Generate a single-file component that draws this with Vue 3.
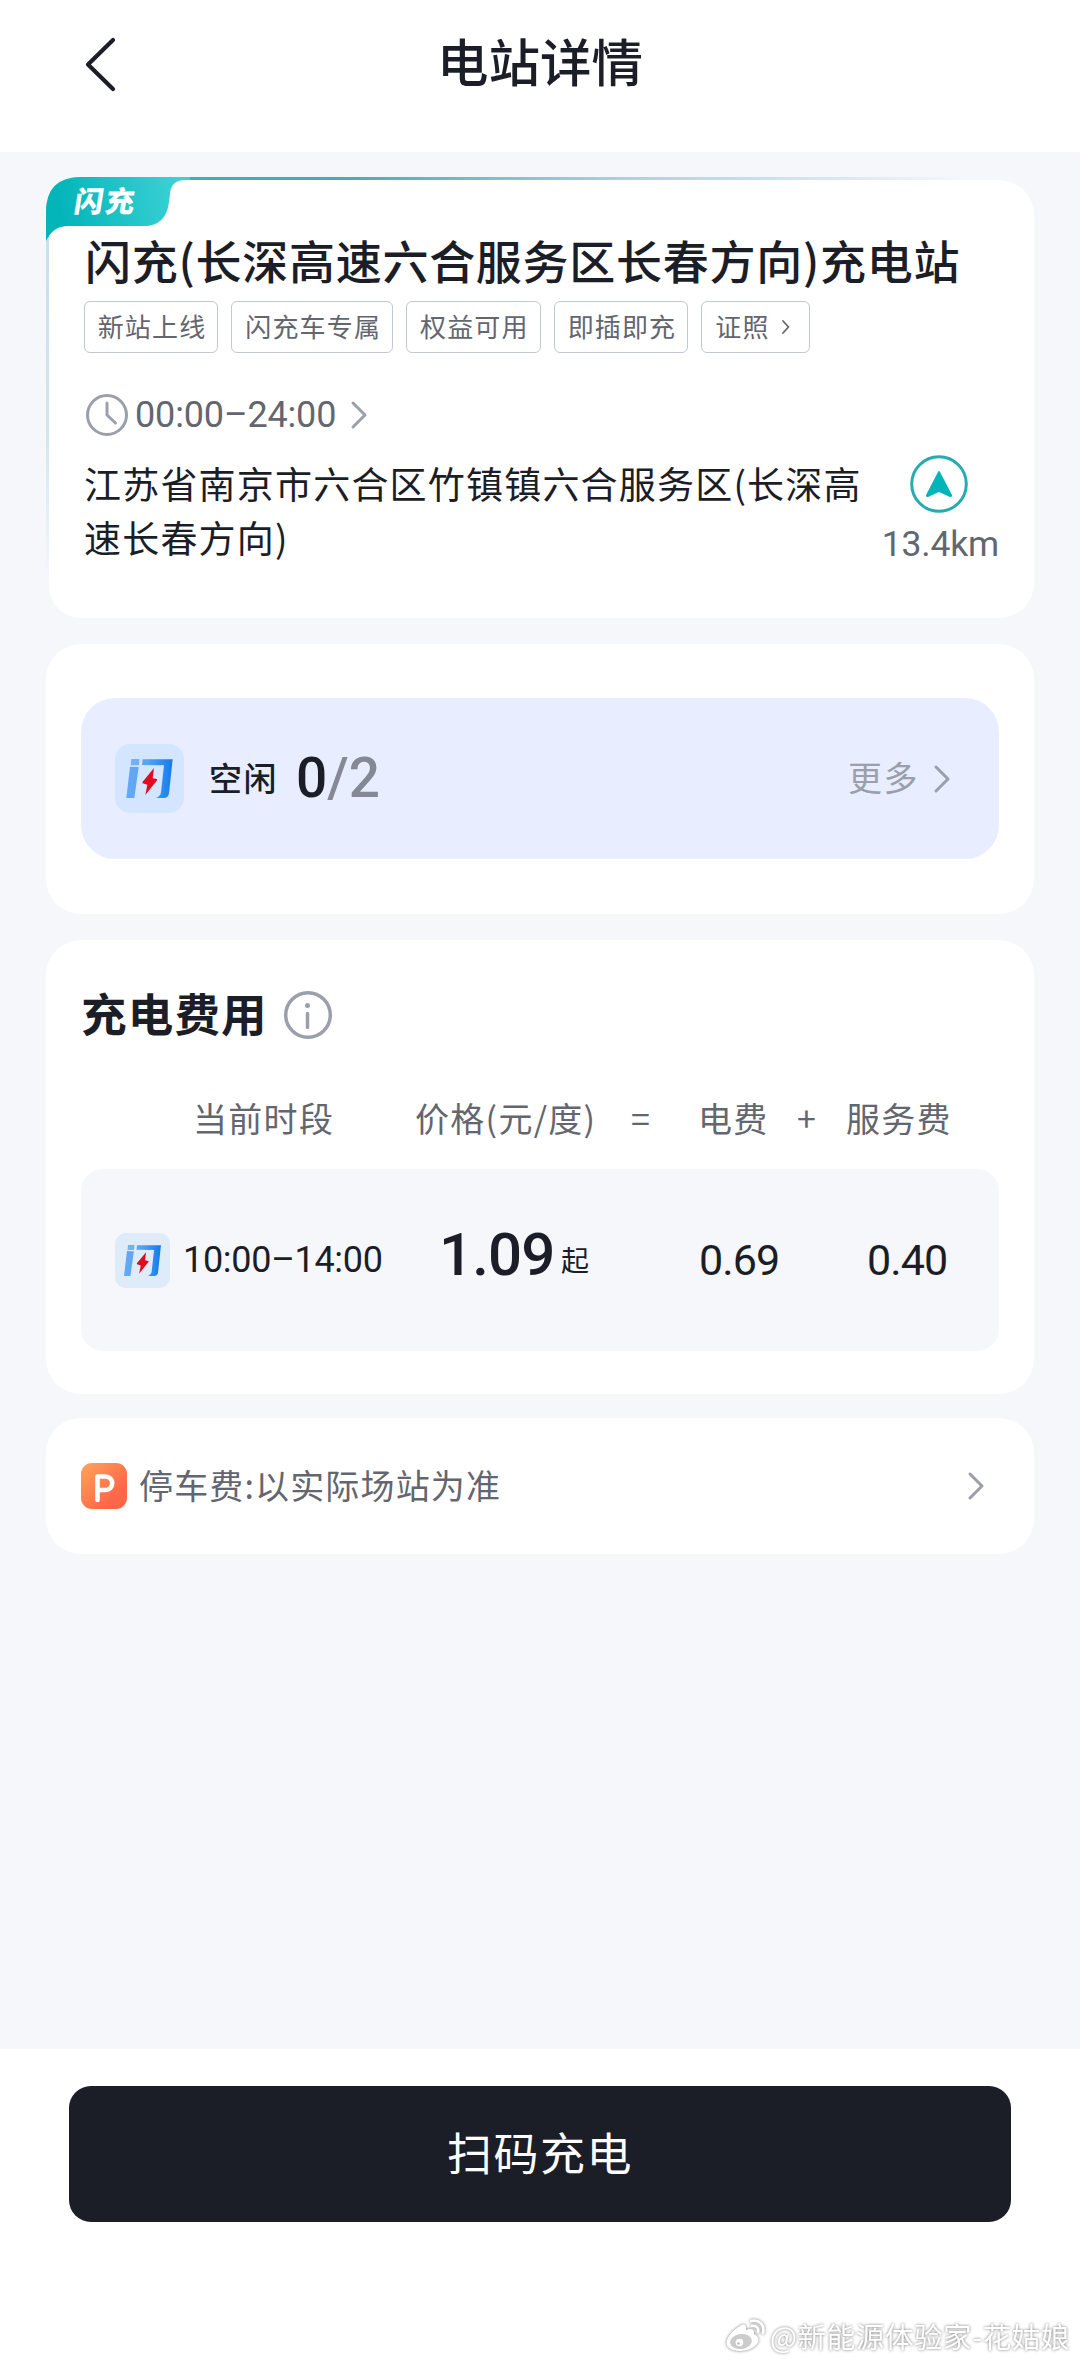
<script setup>
const tags = ['新站上线', '闪充车专属', '权益可用', '即插即充']
const addressLines = ['江苏省南京市六合区竹镇镇六合服务区(长深高', '速长春方向)']
</script>

<template>
  <div class="page">
    <svg class="defs" width="0" height="0" aria-hidden="true">
      <defs>
        <linearGradient id="flash-blue" x1="34" y1="0" x2="173" y2="0" gradientUnits="userSpaceOnUse">
          <stop offset="0" stop-color="#66a9f5" />
          <stop offset="0.45" stop-color="#5aa3f1" />
          <stop offset="1" stop-color="#127bee" />
        </linearGradient>
        <symbol id="flash" viewBox="0 0 207 207">
          <path fill="url(#flash-blue)" opacity="0.85" d="M49 45H73L72 64H47Z" />
          <path fill="url(#flash-blue)" d="M45 68L71 69L58 162H34Z" />
          <path fill="url(#flash-blue)" d="M83 46H173L162 148Q160 162 147 162H123Q136 158 138 145L147 64L81 63Z" />
          <path fill="#e10b1e" d="M117 72L113 103L126 105Q127 108 125 110L91 153L97 122L83 118Q81 116 83 113Z" />
        </symbol>
      </defs>
    </svg>

    <header class="nav">
      <svg class="back" viewBox="0 0 34 58"><path d="M29 5L4 29.500L29 54" /></svg>
      <h1>电站详情</h1>
    </header>

    <main>
      <section class="card station">
        <div class="ribbon">
          <svg viewBox="0 0 144 64">
            <defs>
              <linearGradient id="rb" x1="0" y1="30" x2="130" y2="0" gradientUnits="userSpaceOnUse">
                <stop offset="0.1" stop-color="#03b5b9" />
                <stop offset="1" stop-color="#3bd1d5" />
              </linearGradient>
            </defs>
            <path fill="url(#rb)" d="M0 64V35Q0 0 35 0H144V3H139Q125 3 124 17L123 25Q120 49 98 49H22Q7 49 0 64Z" />
          </svg>
          <span>闪充</span>
        </div>
        <h2>闪充(长深高速六合服务区长春方向)充电站</h2>
        <div class="tags">
          <span v-for="t in tags" :key="t" class="tag">{{ t }}</span>
          <span class="tag">证照<svg class="mini" viewBox="0 0 10 16"><path d="M2 2L7.500 8L2 14" /></svg></span>
        </div>
        <div class="hours">
          <svg class="clock" viewBox="0 0 42 42"><circle cx="21" cy="21" r="19.500" /><path d="M21 9V21L29.500 29" /></svg>
          <span>00:00<i>–</i>24:00</span>
          <svg class="chev" viewBox="0 0 16 28"><path d="M2 2L14 14L2 26" /></svg>
        </div>
        <div class="where">
          <p><span v-for="l in addressLines" :key="l">{{ l }}</span></p>
          <div class="distance">
            <svg viewBox="0 0 58 58">
              <circle cx="29" cy="29" r="27.300" />
              <path d="M28 17Q29 15 30 17L42 40Q42.500 42.500 40 42L29 37L18 42Q15.500 42.500 16 40Z" />
            </svg>
            <span>13.4km</span>
          </div>
        </div>
      </section>

      <section class="card idle">
        <div class="idle-box">
          <svg class="flash-icon"><use href="#flash" /></svg>
          <span class="idle-label">空闲</span>
          <span class="idle-count"><b>0</b>/2</span>
          <span class="more">更多</span>
          <svg class="chev" viewBox="0 0 16 28"><path d="M2 2L14 14L2 26" /></svg>
        </div>
      </section>

      <section class="card fee">
        <div class="fee-title">
          <h3>充电费用</h3>
          <svg viewBox="0 0 50 50"><circle cx="25" cy="25" r="22.300" /><path d="M24.500 23.500V37.500" /><circle class="dot" cx="24.500" cy="15.500" r="2.500" /></svg>
        </div>
        <div class="fee-row head">
          <span class="c1">当前时段</span><span class="c2">价格(元/度)</span><span class="c3">=</span>
          <span class="c4">电费</span><span class="c5">+</span><span class="c6">服务费</span>
        </div>
        <div class="fee-row body">
          <svg class="flash-icon"><use href="#flash" /></svg>
          <span class="time">10:00<i>–</i>14:00</span>
          <span class="price">1.09</span><span class="from">起</span>
          <span class="p1">0.69</span><span class="p2">0.40</span>
        </div>
      </section>

      <section class="card parking">
        <svg class="p-icon" viewBox="0 0 46 46">
          <defs>
            <linearGradient id="pk" x1="0" y1="0" x2="1" y2="1">
              <stop offset="0" stop-color="#ffa45c" />
              <stop offset="0.75" stop-color="#ff6647" />
            </linearGradient>
          </defs>
          <rect width="46" height="46" rx="11" fill="url(#pk)" />
          <path d="M16.500 37V13.500H24.500A6.700 6.700 0 0 1 24.500 27H17" />
        </svg>
        <span>停车费:以实际场站为准</span>
        <svg class="chev" viewBox="0 0 16 28"><path d="M2 2L14 14L2 26" /></svg>
      </section>
    </main>

    <footer>
      <button>扫码充电</button>
      <div class="mark">
        <svg viewBox="0 0 40 34">
          <path class="fill" d="M15 7C19 4 22 6 21 11C26 9 30 10 29 15C34 17 35 22 31 26C25 33 9 34 3 28C-2 22 7 11 15 7Z" />
          <ellipse class="ring" cx="16" cy="22.500" rx="11" ry="7.500" transform="rotate(-8 16 22.500)" />
          <circle class="pupil" cx="14.500" cy="23.500" r="3.800" />
          <circle class="iris" cx="13.500" cy="24.500" r="1.300" />
          <path class="wave" d="M27 7C31 6 34 9 33 13M26 2C34 0 40 6 38 14" />
        </svg>
        <span>@新能源体验家-花姑娘</span>
      </div>
    </footer>
  </div>
</template>

<style>
body { background: #fff; }
</style>

<style scoped>
.page {
  width: 1080px;
  height: 2364px;
  display: flex;
  flex-direction: column;
  overflow: hidden;
  background: #f5f7fb;
  color: #1b1d27;
  font-family: "Noto Sans CJK SC", sans-serif;
  white-space: nowrap;
}
.page * { box-sizing: border-box; }
.defs { position: absolute; }
svg { display: block; flex: none; fill: none; stroke-linecap: round; stroke-linejoin: round; overflow: visible; }
h1, h2, h3, p { margin: 0; }
i { font-style: normal; }

.nav { position: relative; height: 152px; flex: none; background: #fff; display: flex; justify-content: center; }
.back { position: absolute; left: 84px; top: 35px; width: 34px; height: 58px; stroke: #1b1d27; stroke-width: 4.200; }
h1 { height: 124px; line-height: 120px; font-size: 51.500px; font-weight: 500; padding-left: 0; }

main { flex: 1; padding: 25px 46px 0; display: flex; flex-direction: column; }
.card { background: #fff; border-radius: 35px; }

.station { position: relative; height: 441px; padding: 56px 35px 0 37px; }
.station::before {
  content: "";
  position: absolute;
  inset: 0;
  border-radius: 35px;
  background: linear-gradient(90deg, #2fb6bb 0, #45acb8 300px, #a9d2e0 580px, #d8e6f2 780px, #f5f7fb 920px) top / 100% 60px no-repeat,
    linear-gradient(#c5dfec 0, #cfe5f2 250px, #f5f7fb 400px);
}
.station::after {
  content: "";
  position: absolute;
  inset: 3px 0 0 3px;
  border-radius: 32px 35px 35px 32px;
  background: #fff;
}
.station > * { position: relative; z-index: 1; }
.station > .ribbon { position: absolute; left: 0; top: 0; width: 144px; height: 64px; }
.ribbon span {
  position: absolute; left: 29px; top: 0; line-height: 45px;
  font-size: 29px; font-weight: 900; color: #fff; letter-spacing: 2px; transform: skewX(-9deg);
}
h2 { height: 68px; line-height: 52px; font-size: 46px; font-weight: 500; letter-spacing: 0.720px; padding-left: 2px; }
.tags { display: flex; gap: 13px; height: 52px; padding-left: 0.700px; }
.tag {
  height: 52px; padding: 0 11px 3px 13px; line-height: 44px; border: 1.500px solid #c3c7cf; border-radius: 6px;
  font-size: 26px; letter-spacing: 1.150px; color: #63666e; display: flex; align-items: center;
}
.mini { width: 10px; height: 16px; margin: 3px 7px 0 11px; stroke: #63666e; stroke-width: 1.800; }
.hours { height: 42px; margin-top: 41px; padding-left: 3px; display: flex; align-items: center; }
.clock { width: 42px; height: 42px; stroke: #9a9fab; stroke-width: 3; }
.hours span { width: 202px; margin-left: 7px; font-family: Roboto, sans-serif; font-size: 36px; letter-spacing: -0.150px; line-height: 40px; color: #63666e; padding-bottom: 1px; }
.chev { width: 16px; height: 28px; stroke: #9a9fab; stroke-width: 3; }
.hours .chev { margin-left: 14px; }
.where { display: flex; justify-content: space-between; margin-top: 18px; padding-left: 1px; }
.where p span { display: block; height: 54px; line-height: 58px; font-size: 37px; letter-spacing: 1.200px; }
.distance { display: flex; flex-direction: column; align-items: center; color: #63666e; }
.distance svg { width: 58px; height: 58px; margin-top: 1px; margin-right: 2px; }
.distance circle { stroke: #25acb1; stroke-width: 3; }
.distance path { fill: #03b5b9; }
.distance span { font-family: Roboto, sans-serif; font-size: 35.500px; line-height: 42px; margin-top: 10px; letter-spacing: -0.200px; }

.idle { margin-top: 26px; height: 270px; padding: 54px 35px; }
.idle-box { height: 161px; border-radius: 34px; background: #e8eeff; padding: 0 49px 0 34px; display: flex; align-items: center; }
.idle .flash-icon { width: 69px; height: 69px; border-radius: 15px; background: #d3e5ff; }
.idle-label { width: 67px; font-size: 33px; letter-spacing: 1.500px; font-weight: 500; margin-left: 25px; line-height: 80px; padding-bottom: 3px; }
.idle-count { font-family: Roboto, sans-serif; font-size: 55px; font-weight: 500; color: #858995; margin-left: 20px; flex: 1; line-height: 78px; padding-bottom: 2px; }
.idle-count b { font-weight: 500; color: #1b1d27; }
.more { font-size: 34px; letter-spacing: 1.500px; color: #9a9fab; margin-right: 15px; padding-bottom: 4px; }

.fee { margin-top: 26px; height: 454px; padding: 50px 35px 0; }
.fee-title { height: 50px; display: flex; align-items: center; }
h3 { width: 202px; font-size: 45.500px; font-weight: 700; line-height: 50px; letter-spacing: 1.200px; padding: 0 0 6px; }
.fee-title svg { width: 50px; height: 50px; stroke: #9a9fab; stroke-width: 3.500; }
.fee-title .dot { fill: #9a9fab; stroke: none; }
.fee-row { display: flex; align-items: center; }
.head { height: 129px; font-size: 34px; color: #63666e; line-height: 60px; padding-top: 26px; letter-spacing: 1.300px; }
.head span { flex: none; }
.c1 { width: 222px; margin-left: 112px; }
.c2 { width: 216px; }
.c3 { width: 67px; }
.c4 { width: 99px; }
.c5 { width: 49px; }
.body { height: 182px; border-radius: 22px; background: #f5f7fb; }
.body span { font-family: Roboto, "Noto Sans CJK SC", sans-serif; flex: none; line-height: 60px; }
.fee .flash-icon { width: 55px; height: 55px; border-radius: 11px; background: #deecfa; margin-left: 34px; }
.body .time { width: 256px; margin-left: 13px; font-size: 36px; letter-spacing: -0.300px; padding-bottom: 1px; }
.body .price { width: 122px; font-size: 60px; font-weight: 500; letter-spacing: -0.900px; padding-bottom: 10px; }
.body .from { width: 138px; font-size: 28px; padding-top: 3px; }
.p1, .p2 { font-size: 43px; letter-spacing: -0.900px; }
.p1 { width: 168px; }

.parking { margin-top: 24px; height: 136px; padding: 0 50px 0 35px; display: flex; align-items: center; }
.p-icon { width: 46px; height: 46px; stroke: #fff; stroke-width: 4.600; }
.p-icon rect { stroke: none; }
.parking span { flex: 1; margin-left: 12px; font-size: 34px; letter-spacing: 1.150px; color: #63666e; padding-bottom: 4px; }

footer { height: 315px; flex: none; background: #fff; padding: 37px 69px 0; position: relative; }
button {
  display: block; width: 942px; height: 136px; border: 0; border-radius: 22px; background: #1b1d27; color: #fff;
  font: 400 45px/130px "Noto Sans CJK SC", sans-serif; letter-spacing: 1.500px; padding: 0 0 5px;
}
.mark { position: absolute; right: 10px; top: 269px; height: 36px; display: flex; align-items: center; gap: 5px; filter: drop-shadow(0 0 1.500px #777); }
.mark svg { width: 40px; height: 34px; }
.fill { fill: #fff; }
.ring { fill: #ccc; }
.pupil { fill: #fff; }
.iris { fill: #bbb; }
.wave { stroke: #fff; stroke-width: 2.800; }
.mark span { font-size: 28.500px; line-height: 36px; color: #fff; letter-spacing: 0.600px; }
</style>
